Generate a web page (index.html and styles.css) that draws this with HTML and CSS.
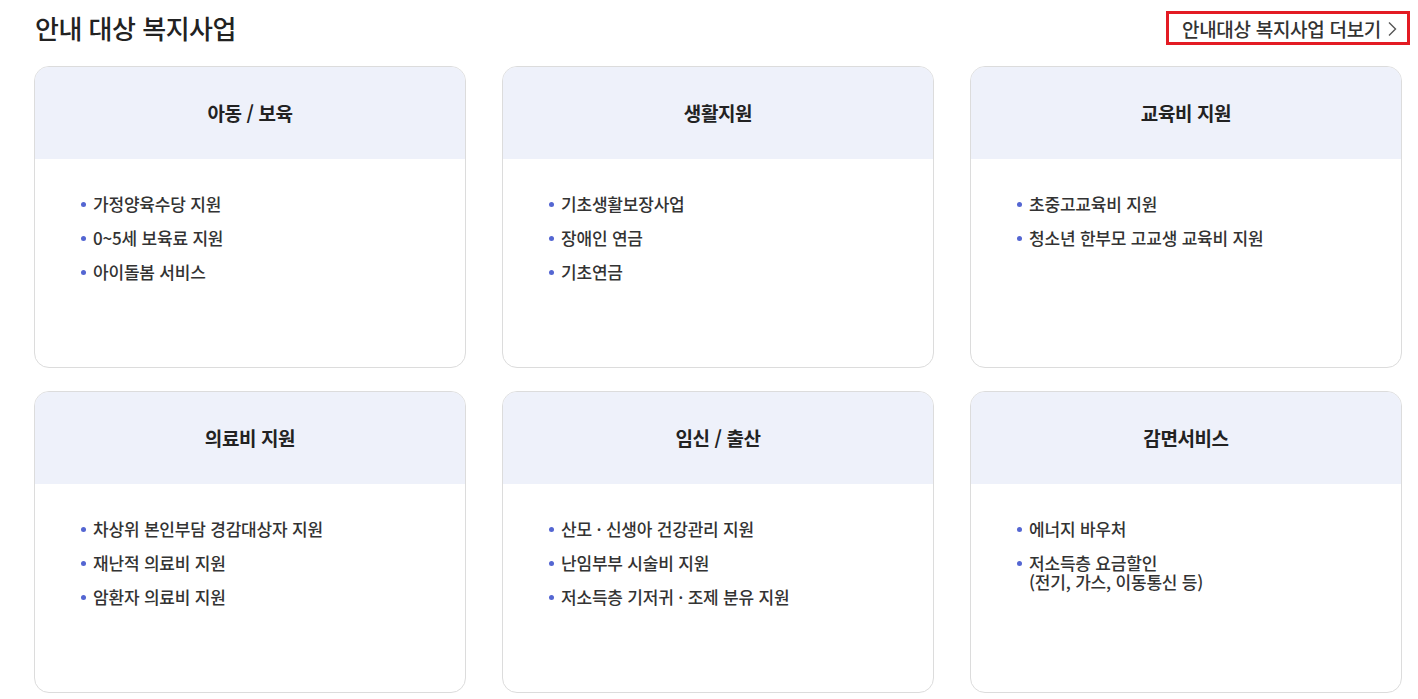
FILE: index.html
```html
<!DOCTYPE html>
<html lang="ko">
<head>
<meta charset="utf-8">
<link rel="stylesheet" href="styles.css">
</head>
<body>
<section class="welfare">
  <div class="head">
    <h2 class="title">안내 대상 복지사업</h2>
    <a class="more" href="#">안내대상 복지사업 더보기
      <svg class="chev" width="9" height="16" viewBox="0 0 9 16"><path d="M1 1.5 L7.5 8 L1 14.5" fill="none" stroke="#555" stroke-width="1.4"/></svg>
    </a>
  </div>
  <div class="grid">
    <div class="card">
      <div class="card-head">아동 / 보육</div>
      <ul class="list">
        <li>가정양육수당 지원</li>
        <li>0~5세 보육료 지원</li>
        <li>아이돌봄 서비스</li>
      </ul>
    </div>
    <div class="card">
      <div class="card-head">생활지원</div>
      <ul class="list">
        <li>기초생활보장사업</li>
        <li>장애인 연금</li>
        <li>기초연금</li>
      </ul>
    </div>
    <div class="card">
      <div class="card-head">교육비 지원</div>
      <ul class="list">
        <li>초중고교육비 지원</li>
        <li>청소년 한부모 고교생 교육비 지원</li>
      </ul>
    </div>
    <div class="card">
      <div class="card-head">의료비 지원</div>
      <ul class="list">
        <li>차상위 본인부담 경감대상자 지원</li>
        <li>재난적 의료비 지원</li>
        <li>암환자 의료비 지원</li>
      </ul>
    </div>
    <div class="card">
      <div class="card-head">임신 / 출산</div>
      <ul class="list">
        <li>산모 · 신생아 건강관리 지원</li>
        <li>난임부부 시술비 지원</li>
        <li>저소득층 기저귀 · 조제 분유 지원</li>
      </ul>
    </div>
    <div class="card">
      <div class="card-head">감면서비스</div>
      <ul class="list">
        <li>에너지 바우처</li>
        <li>저소득층 요금할인<br>(전기, 가스, 이동통신 등)</li>
      </ul>
    </div>
  </div>
</section>
</body>
</html>
```
FILE: styles.css
```css
* { box-sizing: border-box; }
html, body { margin: 0; padding: 0; background: #fff; }
body {
  font-family: "Noto Sans CJK KR", "Noto Sans", sans-serif;
  color: #333;
}
.welfare {
  width: 1418px;
  padding: 0 16px 0 34px;
}
.head {
  display: flex;
  justify-content: space-between;
  align-items: center;
  height: 66px;
  padding-bottom: 12px;
}
.title {
  margin: 0 0 0 1px;
  font-size: 26px;
  font-weight: 500;
  color: #222;
  letter-spacing: -0.5px;
}
.more {
  display: flex;
  align-items: center;
  gap: 7px;
  height: 34px;
  margin-right: -8px;
  margin-top: 2px;
  padding: 0 10px 0 13px;
  border: 3px solid #e31b23;
  text-decoration: none;
  color: #333;
  font-size: 19px;
  font-weight: 500;
  letter-spacing: -0.3px;
}
.chev { margin-top: 1px; }
.grid {
  display: grid;
  grid-template-columns: repeat(3, 432px);
  column-gap: 36px;
  row-gap: 23px;
}
.card {
  height: 302px;
  border: 1px solid #dcdcdc;
  border-radius: 15px;
  overflow: hidden;
}
.card-head {
  height: 92px;
  background: #eef1fa;
  display: flex;
  align-items: center;
  justify-content: center;
  font-size: 19px;
  font-weight: 700;
  color: #222;
  letter-spacing: -0.4px;
  padding-bottom: 1px;
}
.list {
  list-style: none;
  margin: 0;
  padding: 35px 0 0 58px;
}
.list li {
  position: relative;
  font-size: 17px;
  font-weight: 500;
  line-height: 19px;
  color: #333;
  letter-spacing: -0.2px;
  margin-bottom: 15px;
}
.list li::before {
  content: "";
  position: absolute;
  left: -12px;
  top: 8px;
  width: 5px;
  height: 5px;
  border-radius: 50%;
  background: #5466d2;
}
```
